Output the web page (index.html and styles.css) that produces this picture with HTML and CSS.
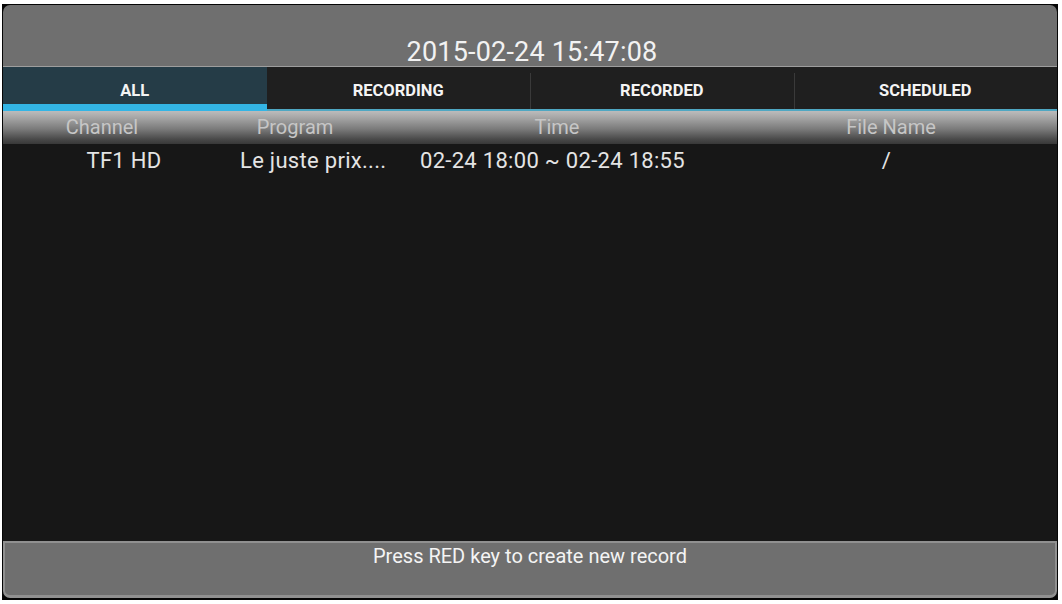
FILE: index.html
```html
<!DOCTYPE html>
<html>
<head>
<meta charset="utf-8">
<link rel="stylesheet" href="styles.css">
</head>
<body>
<div class="frame">
  <header class="top">
    <div class="clock">2015-02-24 15:47:08</div>
  </header>
  <nav class="tabs">
    <div class="tab active">ALL</div>
    <div class="tab">RECORDING</div>
    <div class="tab divided">RECORDED</div>
    <div class="tab divided">SCHEDULED</div>
  </nav>
  <div class="colhead">
    <div class="ch">Channel</div>
    <div class="ch">Program</div>
    <div class="ch">Time</div>
    <div class="ch">File Name</div>
  </div>
  <main class="list">
    <div class="row">
      <div class="c-chan">TF1 HD</div>
      <div class="c-prog">Le juste prix....</div>
      <div class="c-time">02-24 18:00 ~ 02-24 18:55</div>
      <div class="c-file">/</div>
    </div>
  </main>
  <footer class="bottom">
    <div class="hint">Press RED key to create new record</div>
  </footer>
</div>
</body>
</html>
```

FILE: styles.css
```css
html, body {
  margin: 0;
  padding: 0;
  background: #ffffff;
}
body {
  font-family: Roboto, "Liberation Sans", sans-serif;
  width: 1062px;
  height: 604px;
  overflow: hidden;
}
.frame {
  margin: 4px 0 0 2px;
  width: 1054px;
  height: 593px;
  padding: 1px 1px 2px 1px;
  background: #050505;
  display: flex;
  flex-direction: column;
}
.top {
  height: 61px;
  flex: none;
  background: #6f6f6f;
  border-radius: 7px 7px 0 0;
  border-bottom: 1px solid #9e9e9e;
  display: flex;
  align-items: flex-end;
  justify-content: center;
}
.clock {
  color: #f2f2f2;
  font-size: 27px;
  line-height: 27px;
  margin-left: 4px;
  letter-spacing: 0.2px;
}
.tabs {
  height: 44px;
  flex: none;
  display: grid;
  grid-template-columns: repeat(4, 1fr);
  background: #1f1f1f;
}
.tab {
  position: relative;
  display: flex;
  align-items: center;
  justify-content: center;
  color: #f4f4f4;
  font-weight: bold;
  font-size: 16.5px;
  border-bottom: 2px solid #4fa7c2;
  padding-top: 4px;
}
.tab.active {
  background: #253c47;
  border-bottom: 7px solid #33b5e5;
  padding-top: 9px;
}
.tab.divided::before {
  content: "";
  position: absolute;
  left: 0;
  top: 6px;
  bottom: 0;
  width: 1px;
  background: #3a3a3a;
}
.colhead {
  height: 33px;
  flex: none;
  display: grid;
  grid-template-columns: 198px 188px 336px 1fr;
  background: linear-gradient(#bcbcbc 0%, #a6a6a6 20%, #7a7a7a 55%, #4a4a4a 85%, #383838 100%);
}
.ch {
  text-align: center;
  color: #c6c6c6;
  font-size: 20px;
  line-height: 33px;
}
.list {
  flex: 1;
  background: #171717;
}
.row {
  display: grid;
  grid-template-columns: 237px 180px 300px 1fr;
  height: 32px;
  align-items: center;
  color: #e4e4e4;
  font-size: 22px;
  letter-spacing: 0.3px;
}
.c-chan {
  text-align: center;
  padding-left: 5px;
}
.c-prog {
  white-space: nowrap;
  overflow: hidden;
}
.c-time {
  white-space: nowrap;
}
.c-file {
  text-align: center;
  padding-right: 4px;
}
.bottom {
  height: 52px;
  flex: none;
  background: #6f6f6f;
  border: 2px solid #909090;
  border-bottom-width: 3px;
  border-radius: 0 0 7px 7px;
  display: flex;
  justify-content: center;
}
.hint {
  color: #f4f4f4;
  font-size: 20px;
  line-height: 24px;
  padding-top: 1px;
}
```
